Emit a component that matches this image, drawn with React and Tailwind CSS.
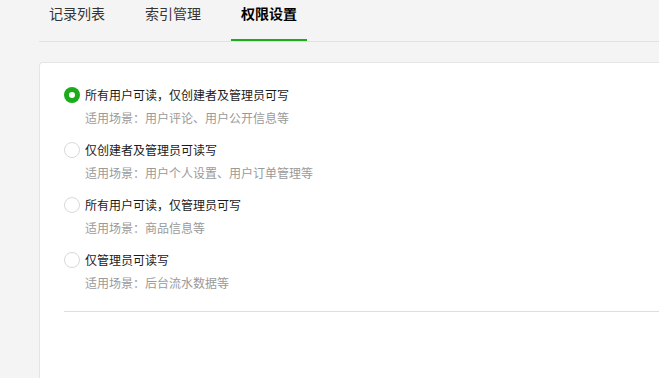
import React from 'react';

const options = [
  { label: '所有用户可读，仅创建者及管理员可写', desc: '适用场景：用户评论、用户公开信息等', checked: true },
  { label: '仅创建者及管理员可读写', desc: '适用场景：用户个人设置、用户订单管理等' },
  { label: '所有用户可读，仅管理员可写', desc: '适用场景：商品信息等' },
  { label: '仅管理员可读写', desc: '适用场景：后台流水数据等' },
];

const tabs = ['记录列表', '索引管理', '权限设置'];

export default function App() {
  return (
    <div
      className="min-h-screen w-[659px] h-[378px] overflow-hidden bg-[#f4f4f4] pl-[39px]"
      style={{ fontFamily: '"Noto Sans CJK SC", "Noto Sans", sans-serif' }}
    >
      <div className="flex h-[42px] gap-[20px] border-b border-[#e2e2e2]">
        {tabs.map((t, i) => (
          <div
            key={t}
            className={
              'w-[76px] h-[41px] pt-[2px] text-center text-[14px] leading-[22px] ' +
              (i === 2 ? 'border-b-2 border-[#1aad19] font-bold text-black' : 'text-[#353535]')
            }
          >
            {t}
          </div>
        ))}
      </div>

      <div className="mt-[20px] h-[400px] rounded-tl-[4px] border-l border-t border-[#e5e5e5] bg-white pl-[24px] pt-[22px]">
        <div className="flex flex-col gap-[12px]">
          {options.map((o) => (
            <div key={o.label}>
              <div className="flex items-center h-[20px]">
                {o.checked ? (
                  <span className="flex h-[16px] w-[16px] items-center justify-center rounded-full bg-[#1aad19]">
                    <span className="h-[6px] w-[6px] rounded-full bg-white" />
                  </span>
                ) : (
                  <span className="h-[16px] w-[16px] rounded-full border border-[#d9d9d9] bg-white" />
                )}
                <span className="ml-[5px] text-[12px] leading-[20px] text-[#1a1a1a]">{o.label}</span>
              </div>
              <div className="mt-[3px] pl-[21px] text-[12px] leading-[20px] text-[#9a9a9a]">{o.desc}</div>
            </div>
          ))}
        </div>
        <div className="mt-[18px] border-t border-[#dedede]" />
      </div>
    </div>
  );
}
